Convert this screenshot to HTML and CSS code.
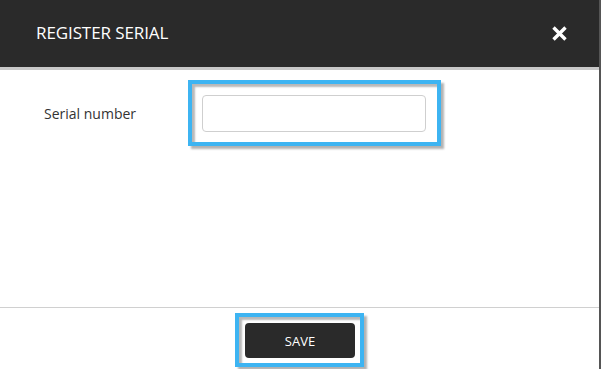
FILE: index.html
```html
<!DOCTYPE html>
<html>
<head>
<meta charset="utf-8">
<link rel="stylesheet" href="styles.css">
</head>
<body>
<div class="modal">
  <div class="header">
    <span class="title">REGISTER SERIAL</span>
    <svg class="close" width="17" height="15" viewBox="0 0 17 15">
      <path d="M2.5 1.5 L14.5 13.5 M14.5 1.5 L2.5 13.5" stroke="#fff" stroke-width="3.4" stroke-linecap="butt" fill="none"/>
    </svg>
  </div>
  <div class="content">
    <div class="row">
      <label class="label">Serial number</label>
      <div class="highlight field-hl">
        <input class="input" type="text">
      </div>
    </div>
  </div>
  <div class="footer">
    <div class="highlight btn-hl">
      <button class="save">SAVE</button>
    </div>
  </div>
</div>
</body>
</html>
```
FILE: styles.css
```css
html, body {
  margin: 0;
  padding: 0;
  background: #fff;
}
body {
  font-family: "Open Sans", "Noto Sans", sans-serif;
}
.modal {
  width: 599px;
  height: 369px;
  border-right: 2px solid #555;
  display: flex;
  flex-direction: column;
  box-sizing: content-box;
}
.header {
  height: 67px;
  background: #2a2a2a;
  border-bottom: 3px solid #c8c8c8;
  display: flex;
  align-items: center;
  justify-content: space-between;
  padding: 0 31px 0 36px;
}
.title {
  color: #fff;
  font-size: 17px;
  letter-spacing: -0.1px;
  position: relative;
  top: -1px;
}
.close {
  display: block;
}
.content {
  flex: 1;
  padding: 10px 0 0 44px;
  border-bottom: 1px solid #d0d0d0;
}
.row {
  display: flex;
  align-items: center;
}
.label {
  width: 144px;
  font-size: 14px;
  color: #333;
}
.highlight {
  border: 4px solid #3db4f2;
  box-shadow: inset 3px 3px 2px rgba(0,0,0,0.28), 3px 3px 2px rgba(0,0,0,0.3);
  background: #fff;
}
.field-hl {
  padding: 11px 11px 10px 10px;
}
.input {
  display: block;
  box-sizing: border-box;
  width: 224px;
  height: 37px;
  border: 1px solid #cfcfcf;
  border-radius: 4px;
  margin: 0;
  padding: 0 8px;
  background: #fff;
  outline: none;
}
.footer {
  height: 61px;
  display: flex;
  justify-content: center;
  align-items: flex-start;
  padding-top: 5px;
  box-sizing: border-box;
}
.btn-hl {
  padding: 6px 5px 5px 6px;
}
.save {
  display: block;
  width: 110px;
  height: 35px;
  background: #2a2a2a;
  color: #fff;
  border: none;
  border-radius: 4px;
  font-family: "Open Sans", "Noto Sans", sans-serif;
  font-size: 13px;
  padding: 0;
  margin: 0;
}
```
